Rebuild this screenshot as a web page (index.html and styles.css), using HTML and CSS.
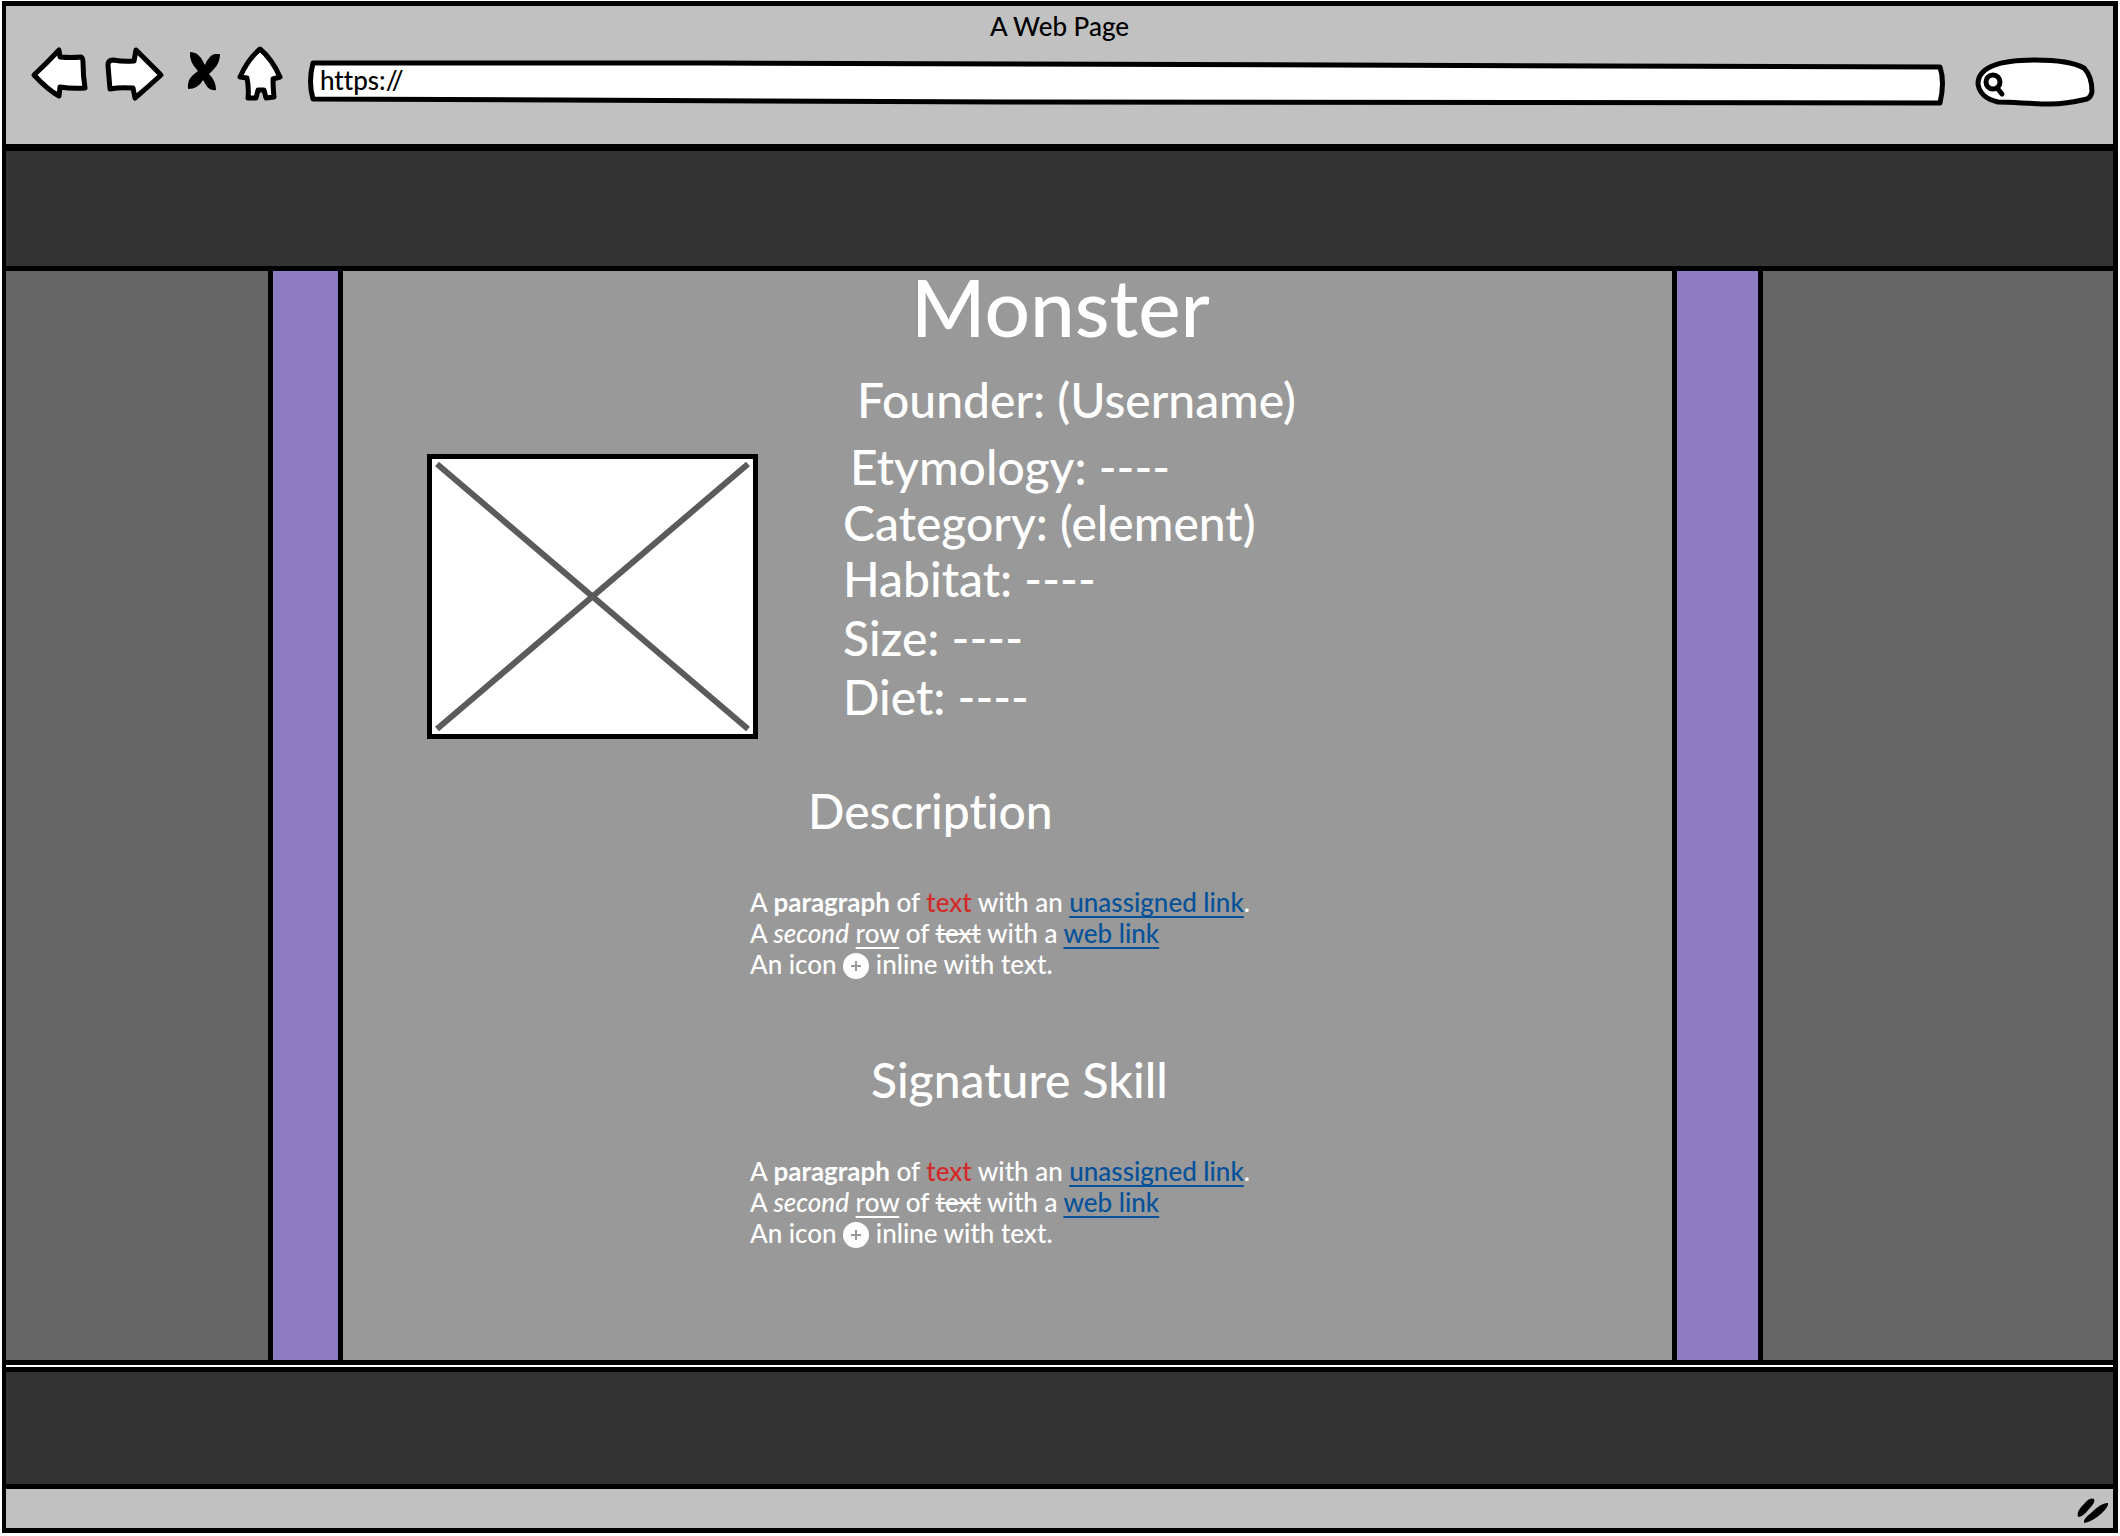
FILE: index.html
```html
<!DOCTYPE html>
<html lang="en">
<head>
<meta charset="utf-8">
<title>A Web Page</title>
<link rel="stylesheet" href="styles.css">
</head>
<body>
<div class="browser">
  <header class="chrome">
    <p class="chrome-title">A Web Page</p>
    <div class="toolbar">
      <button class="tool tool-back" type="button" aria-label="Back">
        <svg width="60" height="60" viewBox="30 46 60 60"><path class="ink" d="M34 75Q46 64 59 50L60 57Q72 58 81 57Q83 58 83 62Q83 76 85 88Q72 89 60 87L59 96Q48 90 34 75Z"/></svg>
      </button>
      <button class="tool tool-forward" type="button" aria-label="Forward">
        <svg width="60" height="60" viewBox="105 46 60 60"><path class="ink" d="M108 65Q108 60 113 60Q124 62 134 61L136 50Q147 61 161 75Q149 86 135 98L133 88Q120 87 110 89Q109 78 108 65Z"/></svg>
      </button>
      <button class="tool tool-stop" type="button" aria-label="Stop">
        <svg width="40" height="60" viewBox="183 46 40 60"><path d="M190 52Q197 52 201 58L205 65Q209 55 215 54L220 54Q220 63 214 69L209 74Q216 81 216 90Q209 91 206 85L203 80Q198 89 188 89Q187 80 193 75L198 71Q189 62 190 52Z"/></svg>
      </button>
      <button class="tool tool-home" type="button" aria-label="Home">
        <svg width="50" height="60" viewBox="235 46 50 60"><path class="ink" d="M260 49Q272 59 280 77L273 79Q273 89 274 97L266 98L264 90H258L256 98L248 98Q249 88 247 78L240 77Q248 59 260 49Z"/></svg>
      </button>
      <div class="field field-url">
        <svg class="field-shape" viewBox="0 0 1638 60" preserveAspectRatio="none" aria-hidden="true"><path class="ink" d="M5 17L400 17L1632 21Q1637 36 1632 57L700 56L5 53Q0 36 5 17Z"/></svg>
        <input class="url" type="text" value="https://" aria-label="Address">
      </div>
      <div class="field field-search">
        <svg class="field-shape" viewBox="1974 46 122 60" preserveAspectRatio="none" aria-hidden="true"><path class="ink" d="M1978 84C1978 70 1992 60 2035 60C2062 60 2075 63 2084 68Q2092 76 2092 92Q2091 97 2087 99C2070 103 2062 104 2050 104C2030 104 2015 102 1998 102Q1980 98 1978 84Z"/><circle class="ink" cx="1993" cy="82" r="7"/><path class="ink" d="M1997 88L2002 94"/></svg>
        <input class="search" type="search" aria-label="Search">
      </div>
    </div>
  </header>

  <div class="banner"></div>

  <div class="columns">
    <aside class="side"></aside>
    <div class="stripe"></div>
    <main class="content">
      <h1>Monster</h1>
      <div class="profile">
        <svg class="portrait" viewBox="0 0 321 275" role="img" aria-label="Monster picture"><path d="M5 5L316 270M316 5L5 270"/></svg>
        <ul class="facts">
          <li class="fact fact-lead">Founder: (Username)</li>
          <li class="fact fact-second">Etymology: ----</li>
          <li class="fact">Category: (element)</li>
          <li class="fact">Habitat: ----</li>
          <li class="fact fact-loose">Size: ----</li>
          <li class="fact fact-loose">Diet: ----</li>
        </ul>
      </div>
      <section class="block">
        <h2 class="heading-description">Description</h2>
        <p>A <b>paragraph</b> of <span class="alert">text</span> with an <a href="#">unassigned link</a>.<br>
        A <i>second</i> <u>row</u> of <s>text</s> with a <a href="#">web link</a><br>
        An icon <svg class="plus" viewBox="0 0 26 26" role="img" aria-label="plus"><circle cx="13" cy="13" r="13"/><path d="M8 13H18M13 8V18"/></svg> inline with text.</p>
      </section>
      <section class="block">
        <h2 class="heading-skill">Signature Skill</h2>
        <p>A <b>paragraph</b> of <span class="alert">text</span> with an <a href="#">unassigned link</a>.<br>
        A <i>second</i> <u>row</u> of <s>text</s> with a <a href="#">web link</a><br>
        An icon <svg class="plus" viewBox="0 0 26 26" role="img" aria-label="plus"><circle cx="13" cy="13" r="13"/><path d="M8 13H18M13 8V18"/></svg> inline with text.</p>
      </section>
    </main>
    <div class="stripe"></div>
    <aside class="side"></aside>
  </div>

  <footer class="footer"></footer>
  <div class="status">
    <svg width="34" height="30" viewBox="2076 1496 34 30" aria-hidden="true"><path d="M2078 1517Q2076 1511 2084 1504Q2090 1497 2094 1499Q2096 1502 2089 1509Q2083 1517 2078 1517ZM2084 1523Q2083 1519 2091 1513Q2102 1502 2108 1503Q2109 1506 2102 1513Q2092 1522 2084 1523Z"/></svg>
  </div>
</div>
</body>
</html>
```

FILE: styles.css
```css
* {
  box-sizing: border-box;
}

body {
  margin: 0;
  padding: 1px 2px 3px;
  min-height: 100vh;
  display: flex;
  flex-direction: column;
  background: #fff;
  color: #000;
  font-family: Lato, "Liberation Sans", sans-serif;
  font-weight: 500;
  font-variant-ligatures: none;
}

h1, h2, p, ul {
  margin: 0;
  padding: 0;
  font-weight: inherit;
}

.browser {
  flex: 1;
  display: flex;
  flex-direction: column;
  border: 5px solid #000;
  border-left-width: 4px;
}

.chrome {
  height: 138px;
  background: #c1c1c1;
}

.chrome-title {
  font-size: 26px;
  line-height: 40px;
  text-align: center;
}

.toolbar {
  display: flex;
  align-items: flex-start;
  padding: 0 17px 0 24px;
}

.tool {
  padding: 0;
  border: 0;
  background: none;
  cursor: pointer;
}

.tool svg,
.field-shape {
  display: block;
  overflow: visible;
}

.tool-back {
  margin-right: 15px;
}

.tool-forward {
  margin-right: 18px;
}

.tool-stop {
  margin-right: 12px;
}

.tool-home {
  margin-right: 23px;
}

.ink {
  fill: #fff;
  stroke: #000;
  stroke-width: 5px;
  stroke-linejoin: round;
  stroke-linecap: round;
  vector-effect: non-scaling-stroke;
}

.field {
  display: grid;
  height: 60px;
}

.field > * {
  grid-area: 1 / 1;
  width: 100%;
  height: 60px;
  min-width: 0;
}

.field input {
  border: 0;
  background: none;
  font: inherit;
  font-size: 26px;
  color: #000;
  outline: none;
}

.field-url {
  flex: 1;
  margin-right: 28px;
}

.field-search {
  width: 122px;
}

.field .url {
  padding: 8px 12px 0;
}

.field .search {
  padding: 8px 12px 0 36px;
}

.banner {
  height: 127px;
  background: #333;
  border-top: 7px solid #000;
  border-bottom: 5px solid #000;
}

.columns {
  flex: 1;
  display: grid;
  grid-template-columns: 262fr 75fr 1329fr 91fr 350fr;
  border-bottom: 5px solid #000;
}

.side {
  background: #666;
}

.stripe {
  background: #8e7cc3;
  border: solid #000;
  border-width: 0 5px;
}

.content {
  background: #999;
  color: #fff;
  padding-bottom: 24px;
}

h1 {
  font-size: 80px;
  line-height: 70px;
  text-align: center;
  padding-left: 106px;
}

.profile {
  display: flex;
  align-items: flex-start;
  padding: 31px 0 0 84px;
}

.portrait {
  width: 331px;
  height: 285px;
  margin-top: 82px;
  margin-right: 85px;
  background: #fff;
  border: 5px solid #000;
  fill: none;
  stroke: #5b5b5b;
  stroke-width: 6px;
}

.facts {
  list-style: none;
}

.fact,
h2 {
  font-size: 48px;
  line-height: 56px;
}

.fact-lead {
  padding-left: 14px;
  margin-bottom: 11px;
}

.fact-second {
  padding-left: 7px;
}

.fact-loose {
  margin-top: 3px;
}

.block {
  padding: 44px 0 0 407px;
}

.block + .block {
  padding-top: 72px;
}

.heading-description {
  padding-left: 58px;
}

.heading-skill {
  padding-left: 121px;
}

.block p {
  margin-top: 48px;
  font-size: 26px;
  line-height: 31px;
}

.alert {
  color: #d32929;
}

a {
  color: #05529a;
}

a, u {
  text-decoration: underline 2px;
  text-underline-offset: 4px;
  text-decoration-skip-ink: none;
}

.plus {
  width: 26px;
  height: 26px;
  vertical-align: 0;
  margin-block: -5px;
  fill: #fff;
  stroke: none;
}

.plus path {
  stroke: #999;
  stroke-width: 2px;
}

.footer {
  height: 122px;
  background: #333;
  border: solid #000;
  border-width: 5px 0;
  margin-top: 2px;
}

.status {
  height: 39px;
  padding: 7px 3px 0 0;
  display: flex;
  justify-content: flex-end;
  background: #c1c1c1;
}
```
